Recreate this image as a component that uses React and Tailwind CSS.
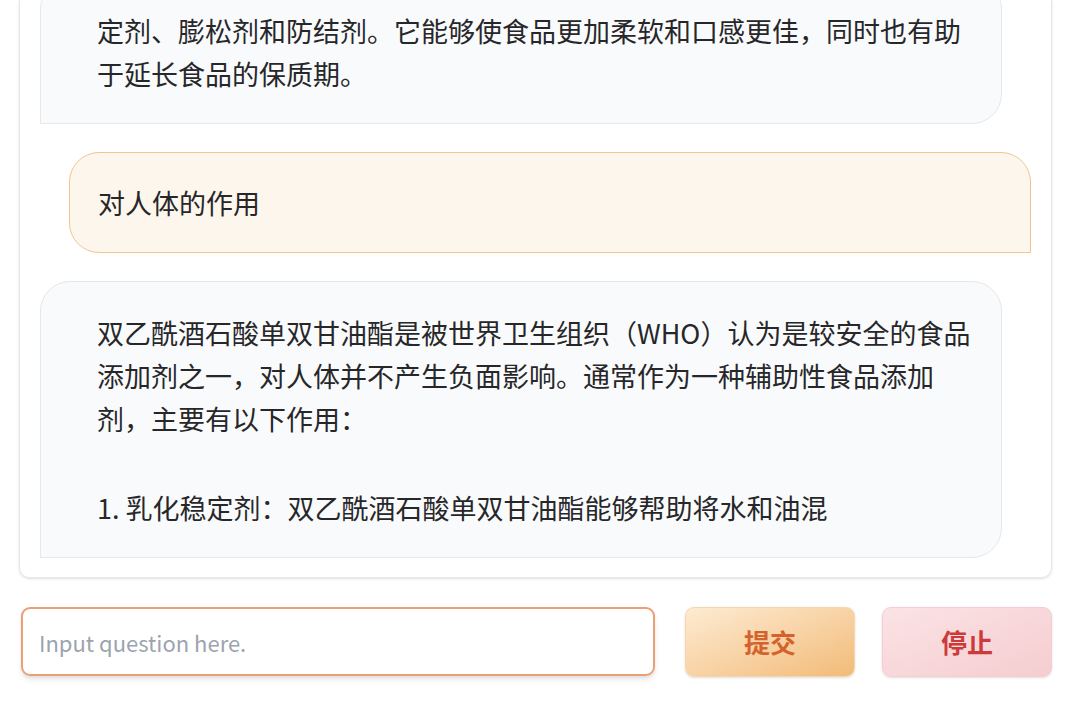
import React from 'react';

const FONT = { fontFamily: '"Noto Sans CJK SC", "Noto Sans", sans-serif' };

const BotBubble = ({ lines }) => (
    <div className="w-[962px] shrink-0 self-start bg-[#f9fafb] border border-[#e5e7eb] rounded-t-[30px] rounded-br-[30px] rounded-bl-none pl-[56px] pr-[28px] pt-[29px] pb-[28px] text-[27px] leading-[43px] text-[#27272a]">
        {lines.map((line, i) =>
            line === '' ? (
                <div key={i} className="h-[46px]" />
            ) : (
                <div key={i} className="whitespace-nowrap h-[43px]">{line}</div>
            )
        )}
    </div>
);

const UserBubble = ({ text }) => (
    <div className="w-[962px] shrink-0 self-end bg-[#fdf6ec] border border-[#f3c48f] rounded-t-[30px] rounded-bl-[30px] rounded-br-none px-[28px] py-[28px] text-[27px] leading-[43px] text-[#27272a]">
        {text}
    </div>
);

export default function App() {
    return (
        <div className="w-full h-[707px] bg-white pl-[19px] pr-[28px] overflow-hidden" style={FONT}>
            <div className="h-[578px] border border-t-0 border-[#e5e7eb] rounded-b-[10px] shadow-sm overflow-hidden flex flex-col justify-end gap-[28px] px-[20px] pb-[19px]">
                <BotBubble
                    lines={[
                        '定剂、膨松剂和防结剂。它能够使食品更加柔软和口感更佳，同时也有助',
                        '于延长食品的保质期。',
                    ]}
                />
                <UserBubble text="对人体的作用" />
                <BotBubble
                    lines={[
                        '双乙酰酒石酸单双甘油酯是被世界卫生组织（WHO）认为是较安全的食品',
                        '添加剂之一，对人体并不产生负面影响。通常作为一种辅助性食品添加',
                        '剂，主要有以下作用：',
                        '',
                        '1. 乳化稳定剂：双乙酰酒石酸单双甘油酯能够帮助将水和油混',
                    ]}
                />
            </div>
            <div className="flex items-center mt-[28px] h-[71px]">
                <input
                    type="text"
                    placeholder="Input question here."
                    className="w-[634px] h-[69px] ml-[2px] border-2 border-[#eb9f74] rounded-[9px] px-[16px] text-[22px] text-gray-700 placeholder:text-[#9ca3af] shadow-md outline-none"
                    style={FONT}
                />
                <button className="ml-[30px] w-[170px] h-[70px] rounded-[9px] border border-[#f8d6ab] bg-gradient-to-br from-[#fdebd2] to-[#f2bb78] text-[#d5622c] text-[26px] font-bold shadow-sm">
                    提交
                </button>
                <button className="ml-[27px] w-[170px] h-[70px] rounded-[9px] border border-[#f6cdd1] bg-gradient-to-br from-[#fbe3e5] to-[#f5cdd0] text-[#cc3a3a] text-[26px] font-bold shadow-sm">
                    停止
                </button>
            </div>
        </div>
    );
}
